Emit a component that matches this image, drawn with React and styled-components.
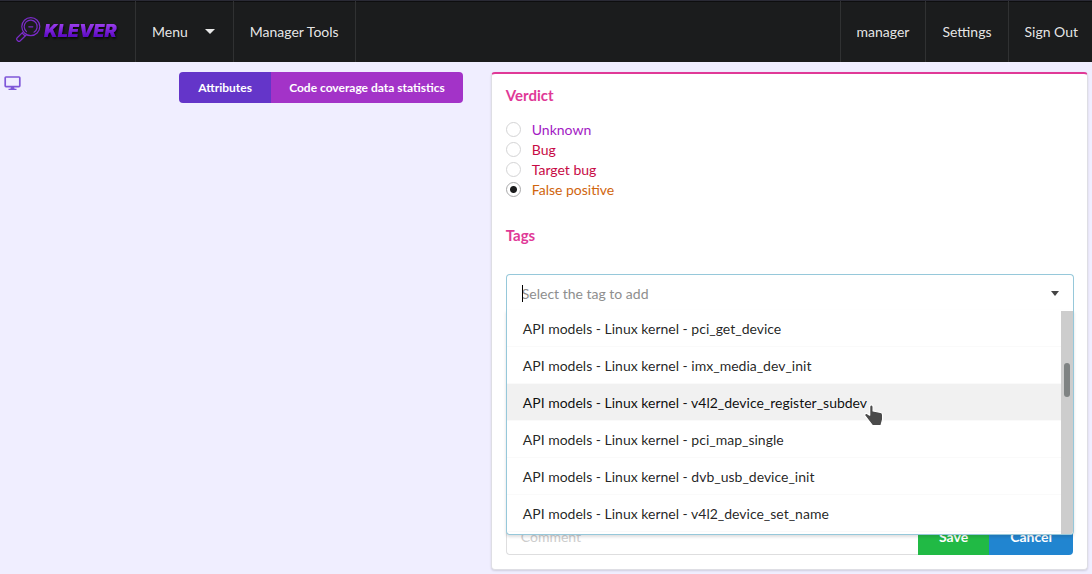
import React from "react";
import styled, { createGlobalStyle } from "styled-components";

const GlobalStyle = createGlobalStyle`
  *, *::before, *::after { box-sizing: border-box; }
  html { height: 100%; }
  body {
    margin: 0;
    min-height: 100%;
    background: #f0eeff;
    color: rgba(0, 0, 0, 0.87);
    font-family: Lato, "Liberation Sans", sans-serif;
    font-size: 14px;
    line-height: 20px;
  }
  button, input { font-family: inherit; }
`;

const Nav = styled.nav`
  display: flex;
  height: 62px;
  background: #1b1c1d;
  border-top: 1px solid #2a2a35;
  box-shadow: inset 0 1px 0 #0e0e0f;
`;

const NavItem = styled.a`
  display: flex;
  align-items: center;
  padding: 0 16px;
  color: rgba(255, 255, 255, 0.9);
  font-size: 14px;
  text-decoration: none;
  border-right: 1px solid #303132;
`;

const MenuButton = styled(NavItem).attrs({ as: "button", type: "button" })`
  gap: 17px;
  padding-right: 18px;
  background: none;
  border-width: 0 1px 0 0;
`;

const RightMenu = styled.div`
  display: flex;
  margin-left: auto;
  border-left: 1px solid #303132;

  & > :last-child { padding-right: 14px; border-right: 0; }
`;

const LogoDrawing = styled.svg`
  overflow: visible;
`;

const LogoText = styled.text`
  font-family: Inter, sans-serif;
  font-size: 18px;
  font-weight: 900;
  font-style: italic;
`;

const Page = styled.main`
  display: grid;
  grid-template-columns: minmax(0, 7fr) minmax(0, 9fr);
  padding: 10px 0 4px;
`;

const LeftColumn = styled.div`
  display: flex;
  justify-content: space-between;
  align-items: flex-start;
  padding: 0 15px 0 4px;
`;

const IconButton = styled.button`
  display: flex;
  padding: 4px 0 0;
  border: 0;
  background: none;
  color: #7f57d9;
`;

const ButtonGroup = styled.div`
  display: flex;
  overflow: hidden;
  border-radius: 4px;
`;

const TabButton = styled.button`
  min-width: 92px;
  height: 31px;
  padding: 0 18px;
  border: 0;
  background: ${(p) => p.$color};
  color: #fff;
  font-size: 12px;
  font-weight: 700;
`;

const RightColumn = styled.div`
  padding: 0 4px 0 13px;
`;

const Panel = styled.section`
  padding: 12px 13px 14px 14px;
  background: #fff;
  border: 1px solid #dedee4;
  border-top: 2px solid #e03997;
  border-radius: 4px;
  box-shadow: 0 1px 2px rgba(34, 36, 38, 0.15);
`;

const Heading = styled.h2`
  margin: 0;
  color: #e03997;
  font-size: 15px;
  font-weight: 700;
  line-height: 18px;
`;

const Verdicts = styled.fieldset`
  margin: 16px 0 26px;
  padding: 0;
  border: 0;
`;

const VerdictLabel = styled.label`
  display: flex;
  align-items: center;
  gap: 11px;
  height: 20px;
  color: ${(p) => p.$color};
`;

const Radio = styled.input`
  appearance: none;
  width: 15px;
  height: 15px;
  margin: 0 0 2px;
  border: 1px solid #d4d4d5;
  border-radius: 50%;
  background: #fff;

  &:checked {
    border-color: #a9a9aa;
    background: radial-gradient(circle, #1b1c1d 3px, #fff 4px);
  }
`;

const Dropdown = styled.div`
  position: relative;
  display: flex;
  align-items: center;
  height: 37px;
  margin-top: 30px;
  padding: 0 14px 0 15px;
  border: 1px solid #96c8da;
  border-bottom: 0;
  border-radius: 4px 4px 0 0;
  color: #444;
`;

const TagInput = styled.input`
  flex: 1;
  min-width: 0;
  height: 34px;
  padding: 0;
  border: 0;
  outline: 0;
  background: none;
  font-size: 14px;

  &::placeholder { color: #8e8e8e; opacity: 1; }
`;

const TextCaret = styled.span`
  position: absolute;
  left: 15px;
  top: 10px;
  width: 1px;
  height: 17px;
  background: #000;
`;

const Menu = styled.div`
  position: absolute;
  z-index: 2;
  top: 35px;
  left: -1px;
  right: -1px;
  height: 225px;
  overflow: hidden;
  background: #fff;
  border: 1px solid #96c8da;
  border-top: 0;
  border-radius: 0 0 4px 4px;
  box-shadow: 0 2px 3px rgba(34, 36, 38, 0.15);
`;

const Options = styled.ul`
  margin: 0;
  padding: 0;
  list-style: none;
`;

const Option = styled.li`
  position: relative;
  height: 37px;
  padding: 9px 16px 8px;
  border-bottom: 1px solid #fafafa;
  line-height: 20px;
  white-space: nowrap;
  background: ${(p) => (p.$hovered ? "#f1f1f1" : "#fff")};
  color: ${(p) => (p.$hovered ? "rgba(0,0,0,.95)" : "rgba(0,0,0,.87)")};
`;

const Pointer = styled.svg`
  position: absolute;
  top: 19px;
  left: 356px;
`;

const ScrollTrack = styled.div`
  position: absolute;
  top: 1px;
  right: 0;
  bottom: 0;
  width: 12px;
  padding: 52px 3px 0;
  background: #cdcdcd;
`;

const ScrollThumb = styled.div`
  height: 34px;
  border-radius: 3px;
  background: #7f8383;
`;

const CommentForm = styled.form`
  display: flex;
  margin-top: 206px;
  padding-right: 1px;
`;

const CommentInput = styled.input`
  flex: 1;
  min-width: 0;
  height: 38px;
  padding: 0 14px;
  border: 1px solid #dededf;
  border-right: 0;
  border-radius: 4px 0 0 4px;
  font-size: 14px;

  &::placeholder { color: #cdcdcd; opacity: 1; }
`;

const FormButton = styled.button`
  height: 38px;
  padding: 0 21px;
  border: 0;
  background: ${(p) => p.$color};
  color: #fff;
  font-size: 14px;
  font-weight: 700;

  &:last-child { border-radius: 0 4px 4px 0; }
`;

const verdicts = [
  ["Unknown", "#a31ac4"],
  ["Bug", "#c70a45"],
  ["Target bug", "#c70a45"],
  ["False positive", "#d0650e"],
];

const tags = [
  "pci_get_device",
  "imx_media_dev_init",
  "v4l2_device_register_subdev",
  "pci_map_single",
  "dvb_usb_device_init",
  "v4l2_device_set_name",
];
const hoveredTag = "v4l2_device_register_subdev";

function Logo() {
  return (
    <LogoDrawing width="103" height="30" viewBox="0 0 103 30" role="img" aria-label="Klever">
      <defs>
        <linearGradient id="klever" x1="0" y1="0" x2="0" y2="1">
          <stop offset="0.2" stopColor="#9a3cec" />
          <stop offset="0.8" stopColor="#5b08c4" />
        </linearGradient>
        <filter id="logo-shadow" x="-10%" y="-20%" width="120%" height="150%">
          <feDropShadow dx="1" dy="1.500" stdDeviation="0.8" floodColor="#000" floodOpacity="0.8" />
        </filter>
      </defs>
      <g fill="none" stroke="#7a2bc8" strokeWidth="1.2" strokeLinecap="round" strokeLinejoin="round">
        <circle cx="14.800" cy="9.600" r="9" />
        <path d="M10.500 14.600a6.500 6.500 0 1 1 7.500.6M12.800 9.800h4" />
        <path d="M7.200 14.800 1 21q-1 1 0 2l1 1q1 1 2 0l6.500-6.300M6.200 16l3 3" />
      </g>
      <LogoText x="28" y="20" fill="url(#klever)" filter="url(#logo-shadow)">KLEVER</LogoText>
    </LogoDrawing>
  );
}

function Caret({ size }) {
  return (
    <svg width={size} height="5" viewBox="0 0 10 5" preserveAspectRatio="none" aria-hidden="true">
      <path d="M0 0h10L5 5z" fill="currentColor" />
    </svg>
  );
}

export default function App() {
  return (
    <>
      <GlobalStyle />
      <Nav>
        <NavItem href="#">
          <Logo />
        </NavItem>
        <MenuButton>
          Menu
          <Caret size="10" />
        </MenuButton>
        <NavItem href="#">Manager Tools</NavItem>
        <RightMenu>
          <NavItem href="#">manager</NavItem>
          <NavItem href="#">Settings</NavItem>
          <NavItem href="#">Sign Out</NavItem>
        </RightMenu>
      </Nav>
      <Page>
        <LeftColumn>
          <IconButton type="button" aria-label="Full screen">
            <svg width="17" height="15" viewBox="0 0 17 15" aria-hidden="true">
              <rect x="1.2" y="1" width="14.6" height="9.6" rx="0.8" fill="none" stroke="currentColor" strokeWidth="1.7" />
              <path d="M7 11h3l.6 1.800H12.500v1.200h-8v-1.200h1.900z" fill="currentColor" />
            </svg>
          </IconButton>
          <ButtonGroup>
            <TabButton type="button" $color="#6435c9">Attributes</TabButton>
            <TabButton type="button" $color="#a333c8">Code coverage data statistics</TabButton>
          </ButtonGroup>
        </LeftColumn>
        <RightColumn>
          <Panel>
            <Heading>Verdict</Heading>
            <Verdicts aria-label="Verdict">
              {verdicts.map(([label, color]) => (
                <VerdictLabel key={label} $color={color}>
                  <Radio type="radio" name="verdict" defaultChecked={label === "False positive"} />
                  {label}
                </VerdictLabel>
              ))}
            </Verdicts>
            <Heading>Tags</Heading>
            <Dropdown>
              <TagInput
                role="combobox"
                aria-label="Tag"
                aria-expanded="true"
                aria-controls="tag-options"
                placeholder="Select the tag to add"
              />
              <TextCaret />
              <Caret size="8" />
              <Menu>
                <Options id="tag-options" role="listbox" aria-label="Tags">
                  {tags.map((tag) => (
                    <Option key={tag} role="option" aria-selected={tag === hoveredTag} $hovered={tag === hoveredTag}>
                      API models - Linux kernel - {tag}
                    </Option>
                  ))}
                </Options>
                <ScrollTrack>
                  <ScrollThumb />
                </ScrollTrack>
                <PointerLayer>
                  <Pointer width="22" height="24" viewBox="0 0 22 24" aria-hidden="true">
                    <path
                      d="M6.700 4q0-2 1.700-2t1.700 2v4l7.500 1.500q2 .4 2 2.400v4.500L18 22.500H9.500L2 12.800q-.8-2 1.500-2.600l3.200 2z"
                      fill="#4a4a4a"
                      stroke="#fff"
                      strokeWidth="1.200"
                      strokeLinejoin="round"
                    />
                  </Pointer>
                </PointerLayer>
              </Menu>
            </Dropdown>
            <CommentForm>
              <CommentInput type="text" aria-label="Comment" placeholder="Comment" />
              <FormButton type="button" $color="#21ba45">Save</FormButton>
              <FormButton type="button" $color="#2185d0">Cancel</FormButton>
            </CommentForm>
          </Panel>
        </RightColumn>
      </Page>
    </>
  );
}

const PointerLayer = styled.div`
  position: absolute;
  top: 74px;
  left: 0;
  pointer-events: none;
`;
